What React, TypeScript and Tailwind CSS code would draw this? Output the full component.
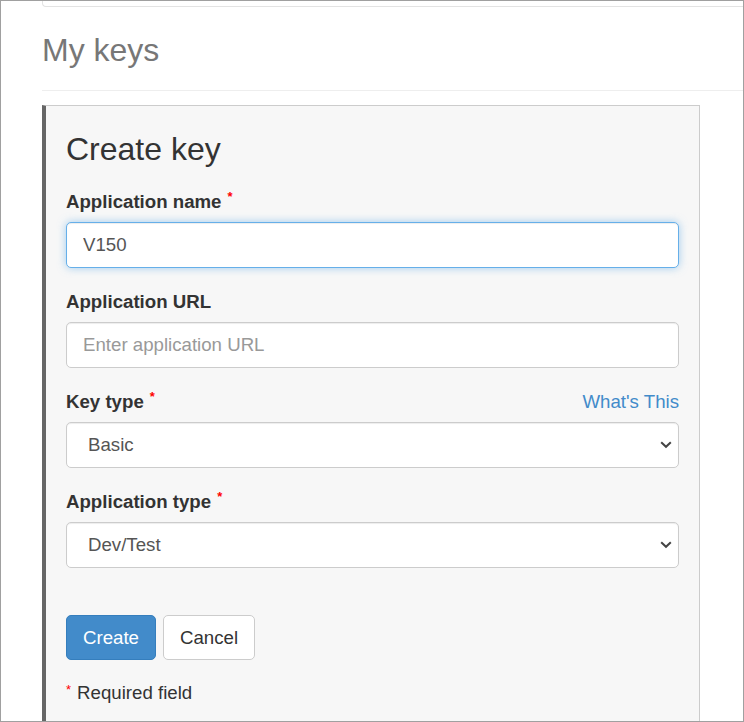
import { ChangeEvent, useState } from "react"

type FieldProps = {
    label: string
    required?: boolean
    extra?: React.ReactNode
    children: React.ReactNode
}

function Req() {
    return <span className="relative top-[2px] ml-[6px] align-top text-[13px] leading-none text-[#f00]">*</span>
}

function Field({ label, required, extra, children }: FieldProps) {
    return (
        <div className="mb-[20px]">
            <div className="mb-[7px] flex h-[27px] items-start justify-between leading-[27px]">
                <label className="font-bold text-[#333]">
                    {label}
                    {required && <Req />}
                </label>
                {extra}
            </div>
            {children}
        </div>
    )
}

function Select({ value, options, onChange }: { value: string, options: string[], onChange: (v: string) => void }) {
    return (
        <div className="relative">
            <select
                value={value}
                onChange={(e: ChangeEvent<HTMLSelectElement>) => onChange(e.target.value)}
                className="h-[46px] w-full appearance-none rounded-[5px] border border-[#ccc] bg-white pl-[21px] pr-[30px] text-[#555] shadow-[inset_0_1px_1px_rgba(0,0,0,0.075)] outline-none"
            >
                {options.map(o => <option key={o}>{o}</option>)}
            </select>
            <svg className="pointer-events-none absolute right-[7px] top-[19px]" width="12" height="8" viewBox="0 0 12 8">
                <path d="M1.2 1.2 L6 5.8 L10.8 1.2" fill="none" stroke="#444" strokeWidth="2" />
            </svg>
        </div>
    )
}

export default function App() {
    const [name, setName] = useState("V150")
    const [url, setUrl] = useState("")
    const [keyType, setKeyType] = useState("Basic")
    const [appType, setAppType] = useState("Dev/Test")

    return (
        <div
            className="h-[722px] w-[744px] overflow-hidden border border-[#a0a0a0] bg-white text-[18.67px] text-[#333]"
            style={{ fontFamily: '"Liberation Sans", Arial, sans-serif' }}
        >
            <div className="pl-[41px]">
                {/* top bar */}
                <div className="h-[6px] rounded-bl-[4px] border-b border-l border-[#e3e3e3] bg-white" />

                {/* page header */}
                <div className="border-b border-[#eee] pb-[22px]">
                    <h1 className="mt-[26px] text-[32px] leading-[35px] text-[#777]">My keys</h1>
                </div>

                {/* create key panel */}
                <div className="mt-[14px] w-[658px] border-l-4 border-r border-t border-l-[#666] border-r-[#ccc] border-t-[#ccc] bg-[#f7f7f7] px-[20px] pb-[40px] pt-[26px]">
                    <h2 className="mb-[21px] text-[32px] leading-[35px] text-[#333]">Create key</h2>

                    <Field label="Application name" required>
                        <input
                            value={name}
                            onChange={e => setName(e.target.value)}
                            className="h-[46px] w-full rounded-[5px] border border-[#66afe9] bg-white px-[16px] text-[#555] shadow-[inset_0_1px_1px_rgba(0,0,0,0.075),0_0_8px_rgba(102,175,233,0.6)] outline-none"
                        />
                    </Field>

                    <Field label="Application URL">
                        <input
                            value={url}
                            onChange={e => setUrl(e.target.value)}
                            placeholder="Enter application URL"
                            className="h-[46px] w-full rounded-[5px] border border-[#ccc] bg-white px-[16px] text-[#555] shadow-[inset_0_1px_1px_rgba(0,0,0,0.075)] outline-none placeholder:text-[#999]"
                        />
                    </Field>

                    <Field label="Key type" required extra={<a href="#" className="font-normal text-[#428bca]">What's This</a>}>
                        <Select value={keyType} options={["Basic", "Premium"]} onChange={setKeyType} />
                    </Field>

                    <Field label="Application type" required>
                        <Select value={appType} options={["Dev/Test", "Production"]} onChange={setAppType} />
                    </Field>

                    {/* buttons */}
                    <div className="mt-[47px] flex gap-[7px]">
                        <button className="h-[45px] rounded-[5px] border border-[#357ebd] bg-[#428bca] px-[16px] text-white hover:opacity-90">Create</button>
                        <button className="h-[45px] rounded-[5px] border border-[#ccc] bg-white px-[16px] text-[#333] hover:bg-gray-100">Cancel</button>
                    </div>

                    <p className="mt-[19px] leading-[27px]">
                        <span className="relative top-[4px] mr-[6px] align-top text-[13px] leading-none text-[#f00]">*</span>
                        Required field
                    </p>
                </div>
            </div>
        </div>
    )
}
